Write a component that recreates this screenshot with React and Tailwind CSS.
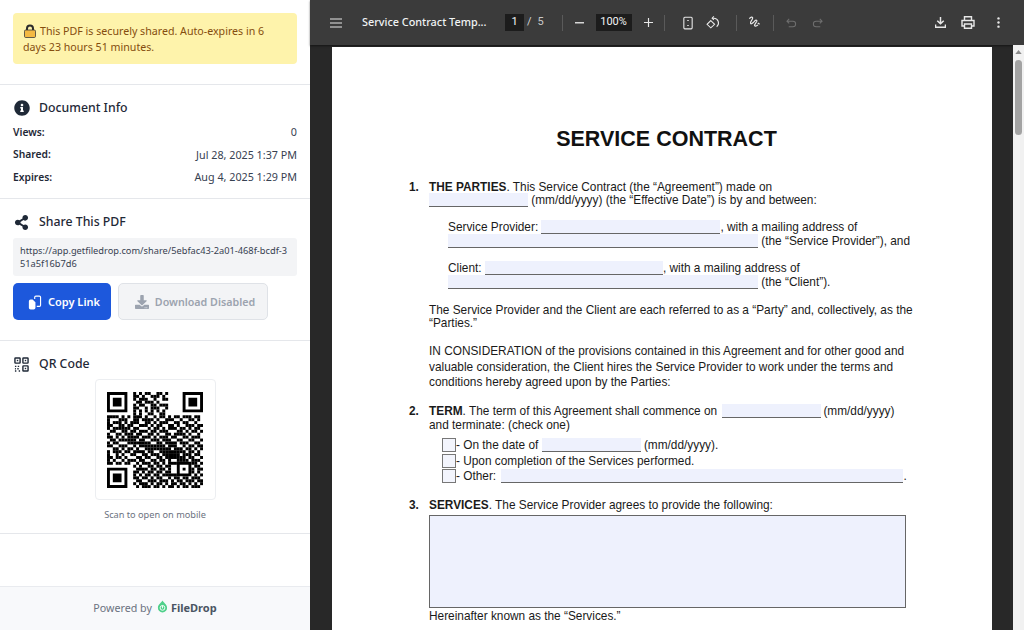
import React from "react";
import { FaInfoCircle, FaShareAlt, FaDownload } from "react-icons/fa";

const QR_ROWS = [
"000000000101011001101000000000000",
"000000000110100111010000000000000",
"000000000101110010011000000000000",
"000000000011011101000000000000000",
"000000000101100110111000000000000",
"000000000110010111001000000000000",
"000000000101010101010000000000000",
"000000000101001100110000000000000",
"111101010111010010110101101110110",
"100011100110111101001110010011010",
"101110101110011010111001101100100",
"110011011001110101100110100111011",
"101111110110001011010111011010110",
"011001101101110110111000110101101",
"100110111011001101001101111010010",
"110101011110111010111011001101110",
"011011111101100111011100110011001",
"101100011111111001101111011100110",
"110011100101111111110111001011011",
"001101011010011111111101110110101",
"101110110111101100111111111011010",
"100101001100110111011111101110110",
"110110100011011001101111111011001",
"101001011101100110110100111101110",
"110110110010111011010111000001101",
"000000000101001101101100000010110",
"000000000011110110110100000001011",
"000000000110101101101100000011010",
"000000000101011011011111110110101",
"000000000110110101100101101101110",
"000000000011001110111010110111011",
"000000000101110101101011011010101",
"000000000010111011010110101101110",
];

function Finder({ x, y }) {
  return <path d={`M${x} ${y}h7v7h-7zM${x + 1} ${y + 1}v5h5v-5zM${x + 2} ${y + 2}h3v3h-3z`} fillRule="evenodd" />;
}

function QR() {
  const cells = [];
  QR_ROWS.forEach((r, y) => {
    const row = r.padEnd(33, "0").slice(0, 33);
    for (let x = 0; x < 33; x++) {
      const inAlign = x >= 24 && x <= 28 && y >= 24 && y <= 28;
      if (row[x] === "1" && !inAlign) cells.push(<rect key={x + "-" + y} x={x} y={y} width="1.02" height="1.02" />);
    }
  });
  return (
    <svg viewBox="0 0 33 33" className="w-[96px] h-[96px]" fill="#000">
      {cells}
      <Finder x={0} y={0} />
      <Finder x={26} y={0} />
      <Finder x={0} y={26} />
      <path d="M24 24h5v5h-5zM25 25v3h3v-3zM26 26h1v1h-1z" fillRule="evenodd" />
    </svg>
  );
}

function Field({ w, className = "" }) {
  return <span style={{ width: w }} className={"h-[14px] shrink-0 bg-[#eef1fd] border-b border-[#666] " + className} />;
}
function Check() {
  return <span className="w-[14px] h-[14px] shrink-0 bg-[#f3f5fd] border-[1.5px] border-[#777]" />;
}
function Line({ className = "", children }) {
  return <div className={"flex items-end h-[13px] leading-[13px] whitespace-pre " + className}>{children}</div>;
}

function Heading({ icon, children }) {
  return (
    <div className="flex items-center h-[20px] text-[12.3px] font-medium text-[#1f2937]">
      <span className="w-[26px] flex items-center pl-[1px]">{icon}</span>
      {children}
    </div>
  );
}

function Row({ label, value }) {
  return (
    <div className="flex justify-between h-[22.5px] items-center text-[10.75px] text-[#374151]">
      <span className="font-semibold text-[10.3px] text-[#1f2937]">{label}</span>
      <span>{value}</span>
    </div>
  );
}

const Sep = ({ className = "" }) => <span className={"w-px h-[16px] bg-[#5a5a5a] shrink-0 " + className} />;

export default function App() {
  return (
    <div className="flex w-[1024px] h-[630px] overflow-hidden bg-white font-['Noto_Sans',sans-serif]">
      <aside className="w-[310px] shrink-0 flex flex-col h-full bg-white">
        <div className="h-[85px] shrink-0 p-[13px] border-b border-[#e5e7eb]">
          <div className="h-[51px] rounded-[4px] bg-[#fef3ab] px-[10px] pt-[10px] text-[10.65px] leading-[16px] text-[#854d0e]">
            <svg viewBox="0 0 12 14" className="inline-block w-[12px] h-[14px] mr-[4px] ml-[1px] align-[-3px]">
              <path d="M3 6.500V4.500a3 3 0 0 1 6 0v2" fill="none" stroke="#2b2b2b" strokeWidth="2" />
              <rect x="0.5" y="6" width="11" height="7.500" rx="1.200" fill="#f4b942" stroke="#3a3a3a" strokeWidth="0.8" />
            </svg>
            This PDF is securely shared. Auto-expires in 6 days 23 hours 51 minutes.
          </div>
        </div>

        <div className="h-[114px] shrink-0 border-b border-[#e5e7eb] px-[13px] pt-[13px]">
          <Heading icon={<FaInfoCircle className="w-[16px] h-[16px] text-[#1f2937]" />}>Document Info</Heading>
          <div className="mt-[3px]">
            <Row label="Views:" value="0" />
            <Row label="Shared:" value="Jul 28, 2025 1:37 PM" />
            <Row label="Expires:" value="Aug 4, 2025 1:29 PM" />
          </div>
        </div>

        <div className="h-[142px] shrink-0 border-b border-[#e5e7eb] px-[13px] pt-[13px]">
          <Heading icon={<FaShareAlt className="w-[15px] h-[15px] text-[#1f2937]" />}>Share This PDF</Heading>
          <div className="mt-[6px] h-[38px] rounded-[3px] bg-[#f3f4f6] px-[7px] py-[6px] text-[9.25px] leading-[13px] text-[#374151] break-all">
            https://app.getfiledrop.com/share/5ebfac43-2a01-468f-bcdf-351a5f16b7d6
          </div>
          <div className="mt-[7px] flex gap-[7px]">
            <button className="w-[98px] h-[37px] rounded-[5px] bg-[#1d58dc] pl-[4px] pt-[1px] text-white text-[11px] font-semibold flex items-center justify-center gap-[6px]">
              <svg viewBox="0 0 16 16" className="w-[14px] h-[15px]" fill="#fff">
                <path d="M1 6.500a2 2 0 0 1 2-2h2.200l3.300 3.300V14a2 2 0 0 1-2 2H3a2 2 0 0 1-2-2z" />
                <path d="M7 2a2 2 0 0 1 2-2h4a2 2 0 0 1 2 2v9a2 2 0 0 1-2 2h-3v-1.300h3a.7.7 0 0 0 .7-.7V2a.7.7 0 0 0-.7-.7H9a.7.7 0 0 0-.7.7v2H7z" />
              </svg>
              Copy Link
            </button>
            <button className="w-[150px] h-[37px] rounded-[5px] bg-[#f3f4f6] border border-[#dfe2e7] pl-[4px] pt-[1px] text-[#9ca3af] text-[10.7px] font-semibold flex items-center justify-center gap-[6px]">
              <FaDownload className="w-[14px] h-[14px]" />
              Download Disabled
            </button>
          </div>
        </div>

        <div className="h-[193px] shrink-0 border-b border-[#e5e7eb] px-[13px] pt-[13px]">
          <Heading icon={
            <svg viewBox="0 0 16 16" className="w-[15px] h-[15px]" fill="none" stroke="#1f2937" strokeWidth="1.500">
              <rect x="1" y="1" width="5.500" height="5.500" rx="0.6" />
              <rect x="9.500" y="1" width="5.500" height="5.500" rx="0.6" />
              <rect x="9.500" y="9.500" width="5.500" height="5.500" rx="0.6" />
              <rect x="3" y="3" width="1.500" height="1.500" fill="#1f2937" stroke="none" />
              <rect x="11.500" y="3" width="1.500" height="1.500" fill="#1f2937" stroke="none" />
              <rect x="11.500" y="11.500" width="1.500" height="1.500" fill="#1f2937" stroke="none" />
              <path d="M1 10h1.500M4 10h2M1 12.500h1M3.500 12.500h1.500M1 15h2M5 15h1.500" strokeDasharray="1.500 1" />
            </svg>
          }>QR Code</Heading>
          <div className="mt-[5px] mx-auto w-[121px] h-[121px] border border-[#eceef1] rounded-[4px] flex items-center justify-center">
            <QR />
          </div>
          <div className="mt-[8px] text-center text-[9.2px] leading-[13px] text-[#6b7280]">Scan to open on mobile</div>
        </div>

        <div className="flex-1" />

        <div className="h-[44px] shrink-0 bg-[#f8f9fb] border-t border-[#e9ebef] flex items-center justify-center text-[10.7px] text-[#6b7280]">
          Powered by
          <svg viewBox="0 0 12 14" className="w-[11px] h-[13px] ml-[5px] mr-[3px] mt-[-4px]">
            <path d="M6 .5C7 3 11 4.500 11 8.500a5 5 0 0 1-10 0C1 4.500 5 3 6 .5z" fill="#4fd08a" />
            <circle cx="6" cy="8.500" r="2.600" fill="none" stroke="#fff" strokeWidth="1" />
            <path d="M6 6v3" stroke="#fff" strokeWidth="1" />
          </svg>
          <span className="font-bold text-[#4b5563] text-[11px]">FileDrop</span>
        </div>
      </aside>

      <main className="flex-1 min-w-0 flex flex-col h-full bg-[#282828]">
        <div className="h-[45px] shrink-0 bg-[#3b3b3b] shadow-[0_1px_2px_rgba(0,0,0,0.5)] flex items-center text-[#e8eaed] text-[11px] font-['Roboto',sans-serif]">
          <svg viewBox="0 0 12 10" className="ml-[20px] w-[12px] h-[10px]" stroke="#e8e8e8" strokeWidth="1.200"><path d="M0 1h12M0 5h12M0 9h12" /></svg>
          <span className="ml-[20px] w-[125px] font-medium text-[#f1f3f4] font-['Noto_Sans',sans-serif] text-[10.85px] whitespace-nowrap">Service Contract Temp...</span>
          <span className="ml-[18px] w-[19px] h-[17px] bg-[#1c1c1c] flex items-center justify-center text-[#f1f3f4]">1</span>
          <span className="ml-[3px] text-[#d8d8d8]">/</span>
          <span className="ml-[6px] w-[16px] text-[#c8c8c8]">5</span>
          <Sep className="ml-[8px]" />
          <svg viewBox="0 0 10 2" className="ml-[12px] w-[9px] h-[2px]" fill="#e8e8e8"><rect width="10" height="1.500" /></svg>
          <span className="ml-[12px] w-[36px] h-[17px] bg-[#1c1c1c] flex items-center justify-center text-[#f1f3f4]">100%</span>
          <svg viewBox="0 0 10 10" className="ml-[12px] w-[9px] h-[9px]" stroke="#e8e8e8" strokeWidth="1.300"><path d="M0 5h10M5 0v10" /></svg>
          <Sep className="ml-[11px]" />
          <svg viewBox="0 0 12 16" className="ml-[18px] w-[10px] h-[14px]" fill="none" stroke="#e8e8e8" strokeWidth="1.300">
            <rect x="1" y="1" width="10" height="14" rx="1.200" />
            <path d="M6 4.500v1M6 10.500v1" strokeWidth="1.800" />
          </svg>
          <svg viewBox="0 0 16 16" className="ml-[13px] w-[14px] h-[14px]" fill="none" stroke="#e8e8e8" strokeWidth="1.200">
            <path d="M5.500 5.200 9.800 9.500 5.500 13.500 1.200 9.500z" />
            <path d="M7 2.500h2a5.500 5.500 0 0 1 3.200 9.800" />
            <path d="M9 .5 7 2.500 9 4.500" />
          </svg>
          <Sep className="ml-[16px]" />
          <svg viewBox="0 0 14 14" className="ml-[11px] w-[13px] h-[13px]" fill="none" stroke="#e8e8e8" strokeWidth="1.300">
            <path d="M1.500 3c1-2 3.500-2.500 3.500-.8C5 4.500 2 6 2.800 8c.8 1.500 3.500-1.500 4.800-3 1-1.200 2.500-.5 1.800 1-.8 1.500-2.800 3.200-2.200 4.500.5 1 2.500 0 3.500-1" />
            <path d="M10.500 7.500l2 1.500" />
          </svg>
          <Sep className="ml-[12px]" />
          <svg viewBox="0 0 12 10" className="ml-[12px] w-[11px] h-[10px]" fill="none" stroke="#6f6f6f" strokeWidth="1.100"><path d="M3.500.5 1 3l2.500 2.500M1 3h6.500a3 3 0 0 1 0 6H3" /></svg>
          <svg viewBox="0 0 12 10" className="ml-[15px] w-[11px] h-[10px]" fill="none" stroke="#6f6f6f" strokeWidth="1.100"><path d="M8.500.5 11 3 8.500 5.500M11 3H4.500a3 3 0 0 0 0 6H9" /></svg>
          <svg viewBox="0 0 12 13" className="ml-[112px] w-[11px] h-[12px]" fill="#e8e8e8"><path d="M5.200 0h1.600v5.500L9 3.400l1.100 1.100L6 8.500 1.900 4.500 3 3.400l2.200 2.100zM0 8h1.400v2.400h9.200V8H12v4H0z" /></svg>
          <svg viewBox="0 0 14 13" className="ml-[15px] w-[14px] h-[13px]" fill="none" stroke="#e8e8e8" strokeWidth="1.400">
            <path d="M3.500 4V.8h7V4M3.500 10H1V4.500h12V10h-2.500" />
            <path d="M3.500 8h7v4.300h-7z" />
          </svg>
          <svg viewBox="0 0 3 12" className="ml-[22px] w-[3px] h-[11px]" fill="#e8e8e8"><circle cx="1.500" cy="1.500" r="1.300" /><circle cx="1.500" cy="6" r="1.300" /><circle cx="1.500" cy="10.500" r="1.300" /></svg>
        </div>

        <div className="flex-1 min-h-0 flex overflow-hidden">
          <div className="flex-1 pl-[22px] pt-[2px] overflow-hidden">
            <div className="w-[660px] h-[900px] bg-white pt-[79px] pl-[77px] text-[11.85px] text-[#1a1a1a] font-['Liberation_Sans',Arial,sans-serif]">
              <h1 className="ml-[-68px] text-center font-bold text-[21.5px] leading-[26px] text-[#111]">SERVICE CONTRACT</h1>

              <Line className="mt-[29px]"><b className="w-[20px]">1.</b><b>THE PARTIES</b>. This Service Contract (the “Agreement”) made on</Line>
              <Line className="ml-[20px]"><Field w={99} /> (mm/dd/yyyy) (the “Effective Date”) is by and between:</Line>

              <Line className="ml-[39px] mt-[14px]">Service Provider: <Field w={179} />, with a mailing address of</Line>
              <Line className="ml-[39px] mt-[1px]"><Field w={310} /> (the “Service Provider”), and</Line>

              <Line className="ml-[39px] mt-[14px]">Client: <Field w={178} />, with a mailing address of</Line>
              <Line className="ml-[39px] mt-[1px]"><Field w={310} /> (the “Client”).</Line>

              <Line className="ml-[20px] mt-[15px]">The Service Provider and the Client are each referred to as a “Party” and, collectively, as the</Line>
              <Line className="ml-[20px]">“Parties.”</Line>

              <Line className="ml-[20px] mt-[15px]">IN CONSIDERATION of the provisions contained in this Agreement and for other good and</Line>
              <Line className="ml-[20px] mt-[3px]">valuable consideration, the Client hires the Service Provider to work under the terms and</Line>
              <Line className="ml-[20px] mt-[2px]">conditions hereby agreed upon by the Parties:</Line>

              <Line className="mt-[16px]"><b className="w-[20px]">2.</b><b>TERM</b>. The term of this Agreement shall commence on <Field w={99} className="ml-[2px]" /><span className="ml-[2px]">(mm/dd/yyyy)</span></Line>
              <Line className="ml-[20px] mt-[1px]">and terminate: (check one)</Line>

              <Line className="ml-[33px] mt-[7px]"><Check />- On the date of <Field w={99} /> (mm/dd/yyyy).</Line>
              <Line className="ml-[33px] mt-[3px]"><Check />- Upon completion of the Services performed.</Line>
              <Line className="ml-[33px] mt-[2px]"><Check />- Other: <Field w={402} className="ml-[2px]" />.</Line>

              <Line className="mt-[16px]"><b className="w-[20px]">3.</b><b>SERVICES</b>. The Service Provider agrees to provide the following:</Line>
              <div className="ml-[20px] mt-[3px] w-[477px] h-[93px] bg-[#eef1fd] border-[1.5px] border-[#666]" />
              <Line className="ml-[20px] mt-[2px]">Hereinafter known as the “Services.”</Line>
            </div>
          </div>
          <div className="w-[11px] shrink-0 bg-[#f1f1f1] flex flex-col items-center">
            <svg viewBox="0 0 8 5" className="mt-[5px] w-[7px] h-[4px]" fill="#8a8a8a"><path d="M4 0l4 5H0z" /></svg>
            <div className="mt-[6px] w-[7px] h-[75px] rounded-full bg-[#a3a3a3]" />
          </div>
        </div>
      </main>
    </div>
  );
}
